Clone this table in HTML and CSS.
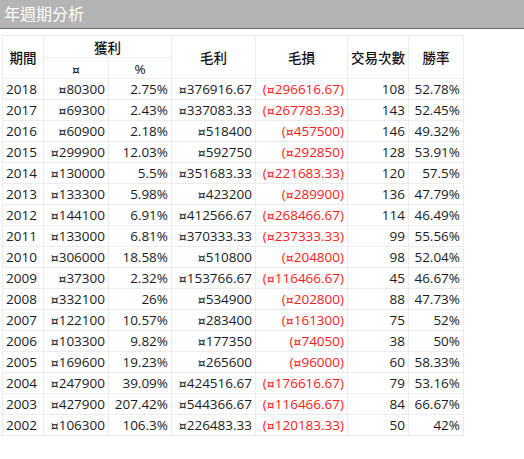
FILE: index.html
```html
<!DOCTYPE html>
<html lang="zh-Hant">
<head>
<meta charset="utf-8">
<title>年週期分析</title>
<link rel="stylesheet" href="styles.css">
</head>
<body>
<div class="titlebar">年週期分析</div>
<div class="content">
<table class="stats">
<colgroup>
<col class="c1"><col class="c2"><col class="c3"><col class="c4"><col class="c5"><col class="c6"><col class="c7">
</colgroup>
<thead>
<tr class="h1">
<th rowspan="2">期間</th>
<th colspan="2">獲利</th>
<th rowspan="2">毛利</th>
<th rowspan="2">毛損</th>
<th rowspan="2">交易次數</th>
<th rowspan="2">勝率</th>
</tr>
<tr class="h2">
<th><span class="cur">¤</span></th>
<th>%</th>
</tr>
</thead>
<tbody>
<tr><td class="yr">2018</td><td><span class="cur">¤</span>80300</td><td>2.75%</td><td><span class="cur">¤</span>376916.67</td><td class="neg">(<span class="cur">¤</span>296616.67)</td><td>108</td><td>52.78%</td></tr>
<tr><td class="yr">2017</td><td><span class="cur">¤</span>69300</td><td>2.43%</td><td><span class="cur">¤</span>337083.33</td><td class="neg">(<span class="cur">¤</span>267783.33)</td><td>143</td><td>52.45%</td></tr>
<tr><td class="yr">2016</td><td><span class="cur">¤</span>60900</td><td>2.18%</td><td><span class="cur">¤</span>518400</td><td class="neg">(<span class="cur">¤</span>457500)</td><td>146</td><td>49.32%</td></tr>
<tr><td class="yr">2015</td><td><span class="cur">¤</span>299900</td><td>12.03%</td><td><span class="cur">¤</span>592750</td><td class="neg">(<span class="cur">¤</span>292850)</td><td>128</td><td>53.91%</td></tr>
<tr><td class="yr">2014</td><td><span class="cur">¤</span>130000</td><td>5.5%</td><td><span class="cur">¤</span>351683.33</td><td class="neg">(<span class="cur">¤</span>221683.33)</td><td>120</td><td>57.5%</td></tr>
<tr><td class="yr">2013</td><td><span class="cur">¤</span>133300</td><td>5.98%</td><td><span class="cur">¤</span>423200</td><td class="neg">(<span class="cur">¤</span>289900)</td><td>136</td><td>47.79%</td></tr>
<tr><td class="yr">2012</td><td><span class="cur">¤</span>144100</td><td>6.91%</td><td><span class="cur">¤</span>412566.67</td><td class="neg">(<span class="cur">¤</span>268466.67)</td><td>114</td><td>46.49%</td></tr>
<tr><td class="yr">2011</td><td><span class="cur">¤</span>133000</td><td>6.81%</td><td><span class="cur">¤</span>370333.33</td><td class="neg">(<span class="cur">¤</span>237333.33)</td><td>99</td><td>55.56%</td></tr>
<tr><td class="yr">2010</td><td><span class="cur">¤</span>306000</td><td>18.58%</td><td><span class="cur">¤</span>510800</td><td class="neg">(<span class="cur">¤</span>204800)</td><td>98</td><td>52.04%</td></tr>
<tr><td class="yr">2009</td><td><span class="cur">¤</span>37300</td><td>2.32%</td><td><span class="cur">¤</span>153766.67</td><td class="neg">(<span class="cur">¤</span>116466.67)</td><td>45</td><td>46.67%</td></tr>
<tr><td class="yr">2008</td><td><span class="cur">¤</span>332100</td><td>26%</td><td><span class="cur">¤</span>534900</td><td class="neg">(<span class="cur">¤</span>202800)</td><td>88</td><td>47.73%</td></tr>
<tr><td class="yr">2007</td><td><span class="cur">¤</span>122100</td><td>10.57%</td><td><span class="cur">¤</span>283400</td><td class="neg">(<span class="cur">¤</span>161300)</td><td>75</td><td>52%</td></tr>
<tr><td class="yr">2006</td><td><span class="cur">¤</span>103300</td><td>9.82%</td><td><span class="cur">¤</span>177350</td><td class="neg">(<span class="cur">¤</span>74050)</td><td>38</td><td>50%</td></tr>
<tr><td class="yr">2005</td><td><span class="cur">¤</span>169600</td><td>19.23%</td><td><span class="cur">¤</span>265600</td><td class="neg">(<span class="cur">¤</span>96000)</td><td>60</td><td>58.33%</td></tr>
<tr><td class="yr">2004</td><td><span class="cur">¤</span>247900</td><td>39.09%</td><td><span class="cur">¤</span>424516.67</td><td class="neg">(<span class="cur">¤</span>176616.67)</td><td>79</td><td>53.16%</td></tr>
<tr><td class="yr">2003</td><td><span class="cur">¤</span>427900</td><td>207.42%</td><td><span class="cur">¤</span>544366.67</td><td class="neg">(<span class="cur">¤</span>116466.67)</td><td>84</td><td>66.67%</td></tr>
<tr><td class="yr">2002</td><td><span class="cur">¤</span>106300</td><td>106.3%</td><td><span class="cur">¤</span>226483.33</td><td class="neg">(<span class="cur">¤</span>120183.33)</td><td>50</td><td>42%</td></tr>
</tbody>
</table>
</div>
</body>
</html>
```
FILE: styles.css
```css
html, body {
  margin: 0;
  padding: 0;
  background: #ffffff;
}
body {
  font-family: "Open Sans", "Noto Sans CJK TC", sans-serif;
  color: #1b1b24;
}
.titlebar {
  height: 28px;
  background: #b4b4b4;
  border-bottom: 1px solid #6a6a6a;
  color: #ffffff;
  font-family: "Noto Sans CJK TC", sans-serif;
  font-size: 16px;
  line-height: 26px;
  padding-left: 4px;
}
.content {
  padding: 6px 0 0 2px;
}
.stats {
  border-collapse: collapse;
  table-layout: fixed;
  width: 462px;
  font-size: 13.5px;
}
.c1 { width: 41px; }
.c2 { width: 65px; }
.c3 { width: 63px; }
.c4 { width: 84px; }
.c5 { width: 92px; }
.c6 { width: 61px; }
.c7 { width: 55px; }
.stats th, .stats td {
  border: 1px solid #ececec;
  padding: 0 3px 0 3px;
  white-space: nowrap;
}
.stats th {
  font-family: "Noto Sans CJK TC", sans-serif;
  font-weight: 500;
  font-size: 13.5px;
  text-align: center;
  color: #111;
}
.stats .h1 th {
  height: 21px;
  line-height: 20px;
}
.stats .h2 th {
  height: 19px;
  line-height: 18px;
  font-family: "Open Sans", sans-serif;
  font-size: 13.5px;
  padding-top: 1px;
}
.stats td {
  height: 20px;
  line-height: 20px;
  text-align: right;
}
.stats td.yr {
  text-align: left;
}
.stats td.neg {
  color: #ff1a1a;
}
.cur {
  font-family: "DejaVu Sans", sans-serif;
  font-size: 12.5px;
  line-height: 1;
}
```
